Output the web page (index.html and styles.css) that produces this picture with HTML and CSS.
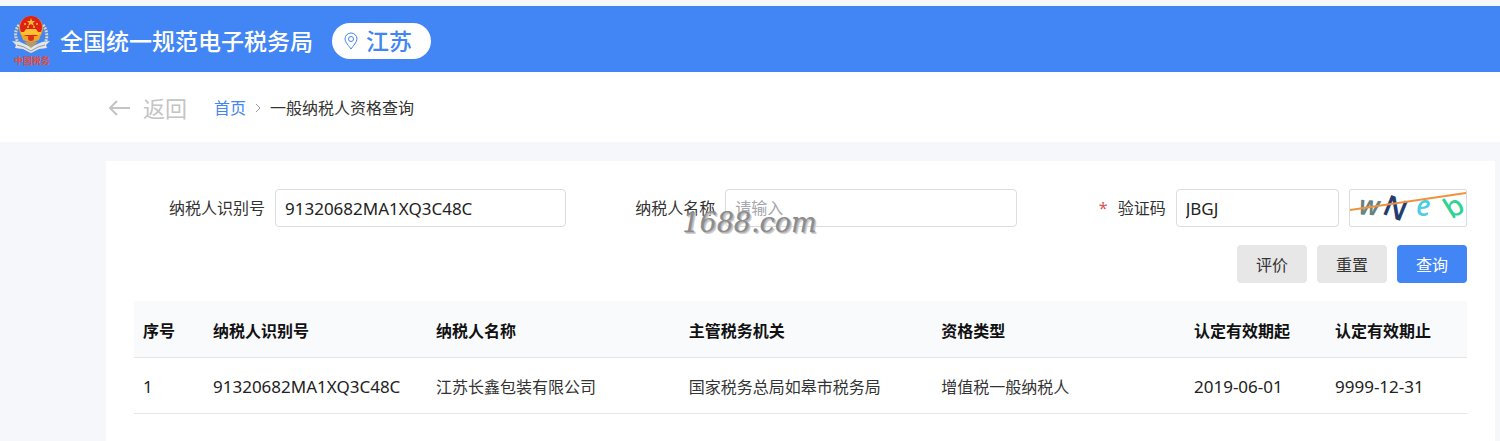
FILE: index.html
```html
<!DOCTYPE html>
<html lang="zh-CN">
<head>
  <meta charset="UTF-8">
  <meta name="viewport" content="width=device-width, initial-scale=1.0">
  <title>一般纳税人资格查询</title>
  <link rel="stylesheet" href="styles.css">
</head>
<body>
  <header class="header">
    <svg class="logo" viewBox="0 0 40 54" aria-hidden="true">
      <!-- wreath -->
      <g fill="none" stroke="#d5d8cf" stroke-width="3" stroke-dasharray="2 1">
        <path d="M8 11C3 17 3 27 12 33"/>
        <path d="M32 11C37 17 37 27 32 31L28 33"/>
      </g>
      <g fill="none" stroke="#8d8f7d" stroke-width="1" stroke-dasharray="1 2">
        <path d="M7 13C3 19 5 27 12 32"/>
        <path d="M33 13C37 19 35 27 28 32"/>
      </g>
      <!-- ribbon -->
      <path d="M1 27l8 1 11 5 11-5 8-1-4 4 1 3-8 1-8 4-8-4-8-1 1-3z" fill="#e4e6e6"/>
      <path d="M6 31l7 2 7 4 7-4 7-2" fill="none" stroke="#929b9f"/>
      <path d="M13 28l7 6 7-6z" fill="#b69a6a"/>
      <!-- emblem -->
      <circle cx="20" cy="14" r="12" fill="#ee9b25"/>
      <circle cx="20" cy="13" r="11" fill="#df2118"/>
      <path d="M20 4l1 3h3l-2 2 1 3-3-2-3 2 1-3-2-2h3z" fill="#ffc22e"/>
      <g fill="#ffc22e">
        <circle cx="14" cy="10" r="1"/>
        <circle cx="26" cy="10" r="1"/>
        <circle cx="17" cy="13" r="1"/>
        <circle cx="23" cy="13" r="1"/>
        <path d="M13 18l2-3h10l2 3h3v3H10v-3z"/>
      </g>
      <path d="M10 20q10 5 20 0l-2 6q-8 4-16 0z" fill="#f3a522"/>
      <circle cx="20" cy="24" r="3" fill="#d7301c"/>
      <text class="logo-text" x="3" y="50">中国税务</text>
    </svg>
    <h1>全国统一规范电子税务局</h1>
    <button type="button" class="region">
      <svg class="pin" viewBox="0 0 14 18" aria-hidden="true">
        <path d="M7 17C5 14 1 10 1 7a6 6 0 0 1 12 0c0 3-4 7-6 10z"/>
        <circle cx="7" cy="7" r="2.5"/>
      </svg>
      江苏
    </button>
  </header>

  <nav class="breadcrumb">
    <a href="#" class="back">
      <svg class="arrow" viewBox="0 0 22 18" aria-hidden="true"><path d="M21 9H1M8 2L1 9l7 7"/></svg>
      返回
    </a>
    <a href="#" class="home">首页</a>
    <svg class="chevron" viewBox="0 0 6 10" aria-hidden="true"><path d="M1 1l4 4-4 4"/></svg>
    <span>一般纳税人资格查询</span>
  </nav>

  <main class="card">
    <form>
      <div class="fields">
        <div class="field">
          <label for="taxId">纳税人识别号</label>
          <input type="text" id="taxId" class="number" value="91320682MA1XQ3C48C">
        </div>
        <div class="field">
          <label for="taxName">纳税人名称</label>
          <input type="text" id="taxName" placeholder="请输入">
          <span class="watermark">1688.com</span>
        </div>
        <div class="field">
          <label for="code"><span class="required">*</span>验证码</label>
          <input type="text" id="code" class="number" value="JBGJ">
          <button type="button" class="captcha" aria-label="验证码">
            <svg viewBox="0 0 116 36">
              <text x="9" y="25" font-size="27" font-style="italic" font-weight="600" fill="#66837f" transform="rotate(4 20 18)">w</text>
              <text x="34" y="28" font-size="29" font-weight="600" fill="#263c70" transform="rotate(22 45 18)">N</text>
              <text x="66" y="26" font-size="28" font-style="italic" font-weight="500" fill="#4bcde5">e</text>
              <text x="95" y="27" font-size="29" font-weight="500" fill="#2ed395" transform="rotate(-32 103 17)">b</text>
              <path d="M0 20L116 3" stroke="#ef923c" stroke-width="2"/>
            </svg>
          </button>
        </div>
      </div>
      <div class="actions">
        <button type="button" class="btn">评价</button>
        <button type="reset" class="btn">重置</button>
        <button type="submit" class="btn primary">查询</button>
      </div>
    </form>

    <table>
      <colgroup>
        <col class="col-no">
        <col class="col-id">
        <col>
        <col>
        <col>
        <col class="col-date">
        <col class="col-date">
      </colgroup>
      <thead>
        <tr>
          <th>序号</th>
          <th>纳税人识别号</th>
          <th>纳税人名称</th>
          <th>主管税务机关</th>
          <th>资格类型</th>
          <th>认定有效期起</th>
          <th>认定有效期止</th>
        </tr>
      </thead>
      <tbody>
        <tr>
          <td class="number">1</td>
          <td class="number">91320682MA1XQ3C48C</td>
          <td>江苏长鑫包装有限公司</td>
          <td>国家税务总局如皋市税务局</td>
          <td>增值税一般纳税人</td>
          <td class="number">2019-06-01</td>
          <td class="number">9999-12-31</td>
        </tr>
      </tbody>
    </table>
  </main>
</body>
</html>
```
FILE: styles.css
```css
* {
  box-sizing: border-box;
}

body {
  margin: 0;
  padding-top: 6px;
  min-height: 100vh;
  display: flex;
  flex-direction: column;
  background: #f6f7fa;
  color: #333;
  font-family: "Noto Sans", "Noto Sans CJK SC", sans-serif;
  font-size: 16px;
  line-height: 24px;
}

button,
input {
  font: inherit;
}

a {
  text-decoration: none;
}

svg {
  flex: none;
}

.number,
.field .number {
  color: #222;
  font-size: 17px;
}

.header {
  display: flex;
  align-items: center;
  height: 66px;
  padding: 3px 11px 0;
  background: #4285f4;
}

.logo {
  width: 40px;
  height: 54px;
}

.logo-text {
  font-size: 9px;
  font-weight: bold;
  fill: #e64b36;
}

.header h1 {
  margin: 0 19px 0 9px;
  color: #fff;
  font-size: 23px;
  font-weight: 500;
  line-height: 36px;
}

.region {
  display: flex;
  align-items: center;
  gap: 8px;
  height: 36px;
  padding: 0 19px 0 12px;
  border: none;
  border-radius: 18px;
  background: #fff;
  color: #4285f4;
  font-size: 23px;
  font-weight: 500;
  line-height: 36px;
}

.pin {
  width: 14px;
  height: 18px;
  fill: none;
  stroke: #4285f4;
}

.breadcrumb {
  display: flex;
  align-items: center;
  height: 70px;
  padding: 1px 109px 0;
  background: #fff;
}

.back {
  display: flex;
  align-items: center;
  gap: 12px;
  margin-right: 27px;
  color: #c4c4c4;
  font-size: 22px;
}

.arrow {
  width: 22px;
  height: 18px;
  fill: none;
  stroke: #c4c4c4;
  stroke-width: 2;
}

.home {
  color: #4285f4;
}

.chevron {
  width: 6px;
  height: 10px;
  margin: 0 9px;
  fill: none;
  stroke: #999;
}

.card {
  flex: 1;
  margin: 19px 5px 0 106px;
  padding: 28px;
  background: #fff;
}

.fields {
  display: grid;
  grid-template-columns: repeat(3, minmax(0, 1fr));
  gap: 18px;
}

.field {
  position: relative;
  display: flex;
  align-items: center;
  gap: 10px;
}

.field label {
  flex: none;
  width: 131px;
  text-align: right;
}

.required {
  margin-right: 10px;
  color: #e34d59;
}

.field input {
  flex: 1;
  min-width: 0;
  height: 38px;
  padding: 0 9px;
  border: 1px solid #dcdcdc;
  border-radius: 4px;
  background: #fff;
  outline: none;
}

.field input::placeholder {
  color: #a6a6ad;
}

.captcha {
  flex: none;
  width: 118px;
  height: 38px;
  padding: 0;
  border: 1px solid #dcdcdc;
  border-radius: 2px;
  background: #fff;
}

.captcha svg {
  display: block;
  width: 116px;
  height: 36px;
}

.watermark {
  position: absolute;
  left: 98px;
  top: 17px;
  color: #8c8c8c;
  font: italic 27px/34px "DejaVu Serif", serif;
  text-shadow: 1px 1px 0 #b4b4b4, 2px 2px 0 #d0d0d0;
  pointer-events: none;
}

.actions {
  display: flex;
  justify-content: flex-end;
  gap: 10px;
  margin: 18px 0;
}

.btn {
  width: 70px;
  height: 38px;
  padding: 2px 0 0;
  border: none;
  border-radius: 4px;
  background: #e7e7e7;
  color: #333;
  cursor: pointer;
}

.btn.primary {
  background: #4285f4;
  color: #fff;
}

table {
  width: 100%;
  table-layout: fixed;
  border-collapse: collapse;
}

th,
td {
  height: 56px;
  padding: 4px 9px 0;
  border-bottom: 1px solid #e4e4e4;
  text-align: left;
  white-space: nowrap;
}

th {
  background: #f9fafc;
  color: #111;
}

.col-no {
  width: 70px;
}

.col-id {
  width: 223px;
}

.col-date {
  width: 141px;
}
```
